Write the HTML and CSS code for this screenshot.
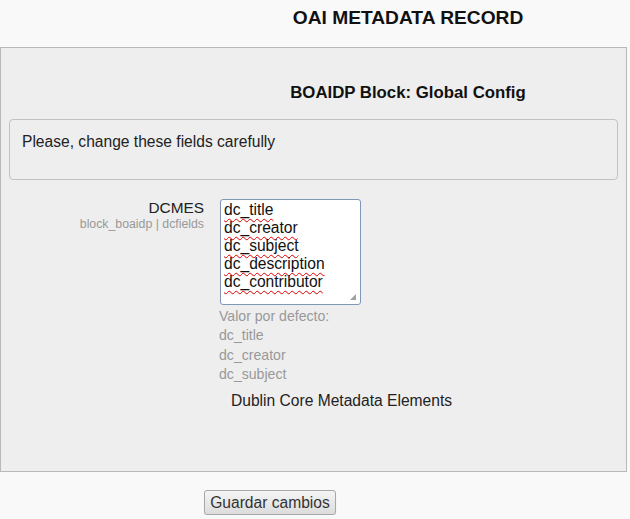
FILE: index.html
```html
<!DOCTYPE html>
<html lang="es">
<head>
<meta charset="utf-8">
<title>OAI METADATA RECORD</title>
<link rel="stylesheet" href="styles.css">
</head>
<body>
<h1 class="page-title">OAI METADATA RECORD</h1>
<form class="settings-form">
  <div class="fieldset">
    <h2 class="section-title">BOAIDP Block: Global Config</h2>
    <div class="notice">Please, change these fields carefully</div>
    <div class="form-row">
      <div class="form-label">
        <label class="label-main" for="dcfields">DCMES</label>
        <span class="label-sub">block_boaidp | dcfields</span>
      </div>
      <div class="form-control">
        <div class="textarea-wrap">
          <textarea id="dcfields" class="field-textarea" spellcheck="false">dc_title
dc_creator
dc_subject
dc_description
dc_contributor</textarea>
          <span class="grip"></span>
        </div>
        <div class="defaults">
          <div>Valor por defecto:</div>
          <div>dc_title</div>
          <div>dc_creator</div>
          <div>dc_subject</div>
        </div>
        <div class="description">Dublin Core Metadata Elements</div>
      </div>
    </div>
  </div>
  <div class="actions">
    <button type="button" class="btn">Guardar cambios</button>
  </div>
</form>
</body>
</html>
```

FILE: styles.css
```css
html, body {
  margin: 0;
  padding: 0;
  background: #f9f9f9;
}
body {
  font-family: "Liberation Sans", Arial, sans-serif;
  font-size: 15.6px;
  line-height: 18px;
  color: #222;
  width: 630px;
}
.page-title {
  margin: 7px 0 18px 0;
  padding-left: 186px;
  text-align: center;
  font-size: 19.2px;
  line-height: 22px;
  font-weight: bold;
  color: #111;
}
.settings-form {
  margin: 0;
}
.fieldset {
  box-sizing: border-box;
  width: 627px;
  border: 1px solid #b9b9b9;
  background: #eeeeee;
  padding: 35px 8px 61px 8px;
}
.section-title {
  margin: 0 0 16px 0;
  padding-left: 189px;
  text-align: center;
  font-size: 16.8px;
  line-height: 20px;
  font-weight: bold;
  color: #111;
}
.notice {
  box-sizing: border-box;
  height: 61px;
  border: 1px solid #c2c2c2;
  border-radius: 4px;
  padding: 13px 11px 0 12px;
  color: #222;
}
.form-row {
  display: grid;
  grid-template-columns: 203px 1fr;
  column-gap: 15px;
  margin-top: 19px;
  margin-left: -8px;
}
.form-label {
  display: flex;
  flex-direction: column;
  align-items: flex-end;
}
.label-main {
  font-size: 15.4px;
  line-height: 18px;
  color: #222;
}
.label-sub {
  font-size: 12.3px;
  line-height: 14px;
  color: #999;
}
.form-control {
  display: flex;
  flex-direction: column;
  align-items: flex-start;
}
.textarea-wrap {
  position: relative;
  margin-left: 1px;
}
.field-textarea {
  display: block;
  box-sizing: border-box;
  width: 141px;
  height: 106px;
  margin: 0;
  padding: 1px 3px;
  border: 1px solid #7f98b5;
  border-radius: 3px;
  background: #fff;
  font-family: "Liberation Sans", Arial, sans-serif;
  font-size: 15.6px;
  line-height: 18px;
  color: #111;
  text-decoration: underline wavy #e00000;
  text-decoration-skip-ink: none;
  text-underline-offset: 3px;
  text-decoration-thickness: 1px;
  overflow: hidden;
  resize: none;
  outline: none;
}
.grip {
  position: absolute;
  right: 5px;
  bottom: 5px;
  width: 0;
  height: 0;
  border-left: 6px solid transparent;
  border-bottom: 6px solid #a0a0a0;
}
.defaults {
  margin-top: 2px;
  font-size: 14.1px;
  line-height: 19.3px;
  color: #999;
}
.description {
  margin: 8px 0 0 12px;
  font-size: 15.6px;
  line-height: 18px;
  color: #222;
}
.actions {
  padding: 18px 0 0 204px;
}
.btn {
  box-sizing: border-box;
  height: 25px;
  width: 132px;
  padding: 0 4px;
  border: 1px solid #a8a8a8;
  border-radius: 3px;
  background: linear-gradient(#f5f5f5, #dcdcdc);
  box-shadow: 0 1px 1px rgba(0,0,0,0.12);
  font-family: "Liberation Sans", Arial, sans-serif;
  font-size: 15.6px;
  line-height: 18px;
  color: #333;
}
```
